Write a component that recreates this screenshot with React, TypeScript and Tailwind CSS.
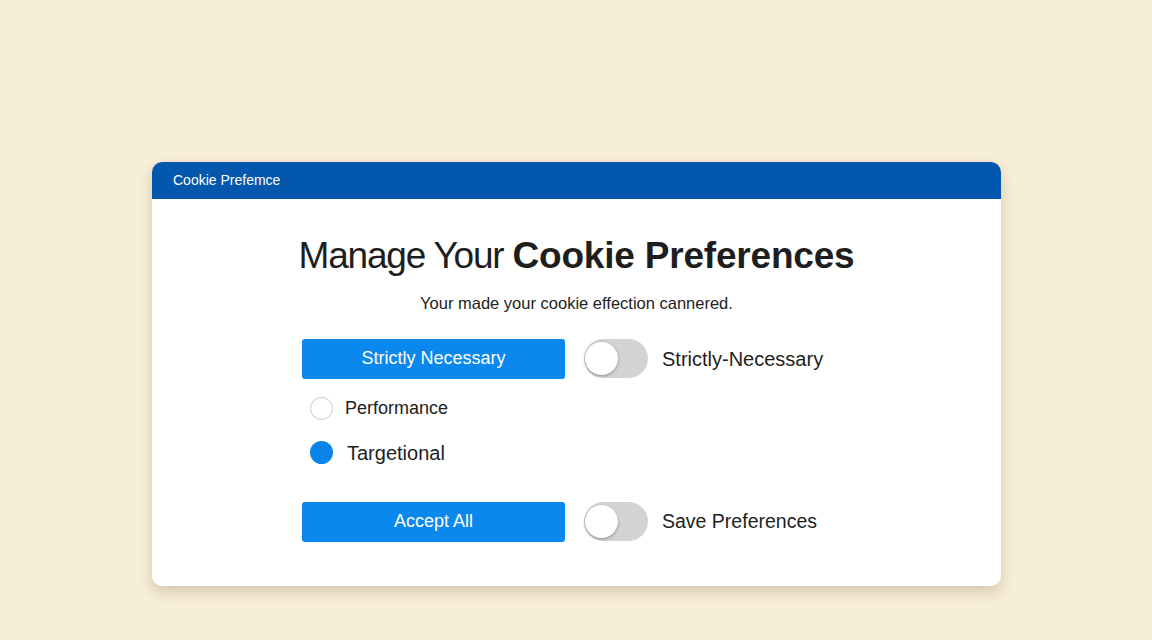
import React from 'react';

function Toggle() {
  return (
    <div className="relative w-[64px] h-[39px] rounded-full bg-[#d3d3d5] shrink-0">
      <div className="absolute left-[1px] top-[3px] w-[33px] h-[33px] rounded-full bg-white shadow-[0_1px_3px_rgba(0,0,0,0.35)]" />
    </div>
  );
}

export default function App() {
  return (
    <div
      className="w-full h-[640px] bg-[#f7eed9] pt-[162px]"
      style={{ fontFamily: '"Liberation Sans", Arial, sans-serif' }}
    >
      <div className="ml-[152px] w-[849px] h-[424px] bg-white rounded-[10px] overflow-hidden shadow-[0_6px_14px_rgba(150,130,80,0.35)]">
        <div className="h-[37px] bg-[#0357ad] flex items-center px-[21px] text-white text-[14px]">
          Cookie Prefemce
        </div>
        <div className="pt-[35px] flex flex-col items-center">
          <h1 className="text-[37px] leading-[44px] text-[#1e1e1e] tracking-[-0.2px]">
            <span className="tracking-[-1.2px]">Manage Your </span>
            <span className="font-bold">Cookie Preferences</span>
          </h1>
          <p className="mt-[13px] text-[16.5px] text-[#222]">Your made your cookie effection cannered.</p>
        </div>
        <div className="pl-[150px] pt-[23px]">
          <div className="flex items-center">
            <button className="w-[263px] h-[40px] rounded-[3px] bg-[#0b88ee] text-white text-[18px]">
              Strictly Necessary
            </button>
            <div className="ml-[19px]"><Toggle /></div>
            <span className="ml-[14px] text-[20px] text-[#1e1e1e]">Strictly-Necessary</span>
          </div>
          <div className="flex items-center mt-[16px] pl-[8px]">
            <div className="w-[23px] h-[23px] rounded-full border border-[#c9c9c9] bg-white" />
            <span className="ml-[12px] text-[18px] text-[#222]">Performance</span>
          </div>
          <div className="flex items-center mt-[16px] pl-[8px]">
            <div className="w-[23px] h-[23px] rounded-full bg-[#0b84ea]" />
            <span className="ml-[14px] text-[20px] text-[#1e1e1e]">Targetional</span>
          </div>
          <div className="flex items-center mt-[34px]">
            <button className="w-[263px] h-[40px] rounded-[3px] bg-[#0b88ee] text-white text-[18px]">
              Accept All
            </button>
            <div className="ml-[19px]"><Toggle /></div>
            <span className="ml-[14px] text-[19.5px] text-[#1e1e1e]">Save Preferences</span>
          </div>
        </div>
      </div>
    </div>
  );
}
